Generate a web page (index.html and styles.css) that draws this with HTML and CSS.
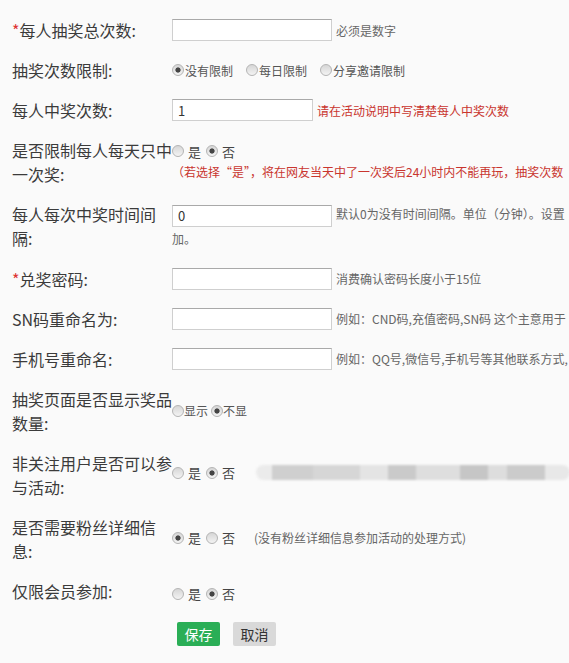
FILE: index.html
```html
<!DOCTYPE html>
<html lang="zh-CN">
<head>
<meta charset="utf-8">
<title>抽奖设置</title>
<link rel="stylesheet" href="styles.css">
</head>
<body>
<form class="form">
  <div class="row">
    <label class="label"><span class="req">*</span>每人抽奖总次数:</label>
    <div class="field">
      <input class="text" type="text">
      <span class="hint">必须是数字</span>
    </div>
  </div>

  <div class="row">
    <label class="label">抽奖次数限制:</label>
    <div class="field">
      <label class="opt"><input class="radio" type="radio" name="limit" checked><span class="opt-text">没有限制</span></label>
      <label class="opt"><input class="radio" type="radio" name="limit"><span class="opt-text">每日限制</span></label>
      <label class="opt"><input class="radio" type="radio" name="limit"><span class="opt-text">分享邀请限制</span></label>
    </div>
  </div>

  <div class="row">
    <label class="label">每人中奖次数:</label>
    <div class="field">
      <input class="text text-short" type="text" value="1">
      <span class="hint hint-red">请在活动说明中写清楚每人中奖次数</span>
    </div>
  </div>

  <div class="row">
    <label class="label">是否限制每人每天只中一次奖:</label>
    <div class="field-stack off-2">
      <div class="yn">
        <input class="radio" type="radio" name="daily"><span class="yn-text">是</span>
        <input class="radio" type="radio" name="daily" checked><span class="yn-text">否</span>
      </div>
      <div class="warn">（若选择“是”，将在网友当天中了一次奖后24小时内不能再玩，抽奖次数</div>
    </div>
  </div>

  <div class="row">
    <label class="label">每人每次中奖时间间隔:</label>
    <div class="field-flow">
      <input class="text" type="text" value="0"><span class="hint">默认0为没有时间间隔。单位（分钟）。设置</span><br><span class="hint-plain">加。</span>
    </div>
  </div>

  <div class="row">
    <label class="label"><span class="req">*</span>兑奖密码:</label>
    <div class="field">
      <input class="text" type="text">
      <span class="hint">消费确认密码长度小于15位</span>
    </div>
  </div>

  <div class="row">
    <label class="label">SN码重命名为:</label>
    <div class="field">
      <input class="text" type="text">
      <span class="hint">例如：CND码,充值密码,SN码 这个主意用于</span>
    </div>
  </div>

  <div class="row">
    <label class="label">手机号重命名:</label>
    <div class="field">
      <input class="text" type="text">
      <span class="hint">例如：QQ号,微信号,手机号等其他联系方式,</span>
    </div>
  </div>

  <div class="row">
    <label class="label">抽奖页面是否显示奖品数量:</label>
    <div class="field off-12">
      <input class="radio" type="radio" name="show"><span class="tight-text">显示</span>
      <input class="radio" type="radio" name="show" checked><span class="tight-text">不显</span>
    </div>
  </div>

  <div class="row">
    <label class="label">非关注用户是否可以参与活动:</label>
    <div class="field off-10">
      <div class="yn">
        <input class="radio" type="radio" name="follow"><span class="yn-text">是</span>
        <input class="radio" type="radio" name="follow" checked><span class="yn-text">否</span>
      </div>
      <div class="redacted"></div>
    </div>
  </div>

  <div class="row">
    <label class="label">是否需要粉丝详细信息:</label>
    <div class="field off-11">
      <div class="yn">
        <input class="radio" type="radio" name="fans" checked><span class="yn-text">是</span>
        <input class="radio" type="radio" name="fans"><span class="yn-text">否</span>
      </div>
      <span class="note">(没有粉丝详细信息参加活动的处理方式)</span>
    </div>
  </div>

  <div class="row">
    <label class="label">仅限会员参加:</label>
    <div class="field off-3">
      <div class="yn">
        <input class="radio" type="radio" name="member"><span class="yn-text">是</span>
        <input class="radio" type="radio" name="member" checked><span class="yn-text">否</span>
      </div>
    </div>
  </div>

  <div class="actions">
    <button class="btn btn-save" type="button">保存</button>
    <button class="btn btn-cancel" type="button">取消</button>
  </div>
</form>
</body>
</html>
```

FILE: styles.css
```css
html, body {
  margin: 0;
  padding: 0;
  overflow: hidden;
  background: #fafafa;
}

body {
  font-family: "Noto Sans CJK SC", sans-serif;
  color: #3b3b3b;
}

.form {
  width: 557px;
  padding: 18px 0 0 12px;
}

.row {
  display: flex;
  align-items: flex-start;
  margin-bottom: 16px;
}

.label {
  width: 160px;
  flex: none;
  font-size: 16px;
  line-height: 24px;
  color: #3b3b3b;
}

.req {
  color: #d33;
}

.field {
  display: flex;
  align-items: center;
  min-height: 24px;
  font-size: 12px;
  white-space: nowrap;
}

.field-stack {
  font-size: 12px;
  white-space: nowrap;
}

.field-flow {
  font-size: 12px;
  line-height: 24px;
  white-space: nowrap;
}

.field-flow .text {
  vertical-align: middle;
}

.off-2 { padding-top: 2px; }
.off-3 { padding-top: 3px; }
.off-10 { padding-top: 10px; }
.off-11 { padding-top: 11px; }
.off-12 { padding-top: 12px; }

.text {
  width: 160px;
  height: 22px;
  box-sizing: border-box;
  margin: 0;
  padding: 0 5px;
  border: 1px solid #cfcfcf;
  border-top-color: #a9a9a9;
  border-radius: 0;
  background: #fff;
  font-family: "Noto Sans CJK SC", sans-serif;
  font-size: 13px;
  color: #333;
}

.text-short {
  width: 141px;
}

.hint {
  margin-left: 4px;
  color: #666;
}

.hint-plain {
  color: #666;
}

.hint-red {
  color: #c9352e;
}

.radio {
  appearance: none;
  -webkit-appearance: none;
  flex: none;
  width: 12px;
  height: 12px;
  margin: 0;
  box-sizing: border-box;
  border: 1px solid #b4b4b4;
  border-radius: 50%;
  background: linear-gradient(#d6d6d6, #f3f3f3);
  vertical-align: middle;
}

.radio:checked {
  background:
    radial-gradient(circle, #444 0 2.2px, transparent 3px),
    linear-gradient(#d6d6d6, #f3f3f3);
}

.opt {
  display: inline-flex;
  align-items: center;
  margin-right: 13px;
  color: #555;
}

.opt-text {
  margin-left: 1px;
}

.yn {
  display: flex;
  align-items: center;
  height: 22px;
  font-size: 13px;
  color: #444;
}

.yn-text {
  margin: 0 5px 0 4px;
}

.warn {
  line-height: 20px;
  color: #c9352e;
}

.tight-text {
  margin-right: 3px;
  color: #555;
}

.redacted {
  margin-left: 16px;
  width: 314px;
  height: 15px;
  border-radius: 8px;
  background: linear-gradient(90deg,
    #ebebeb 0 5%,
    #cfcfcf 5% 18%,
    #d6d6d6 18% 33%,
    #e4e4e4 33% 42%,
    #cacaca 42% 51%,
    #dedede 51% 65%,
    #c6c6c6 65% 74%,
    #dddddd 74% 80%,
    #cbcbcb 80% 92%,
    #e8e8e8 92% 100%);
  filter: blur(1px);
}

.note {
  margin-left: 14px;
  color: #666;
}

.actions {
  display: flex;
  gap: 13px;
  padding-left: 165px;
}

.btn {
  width: 43px;
  height: 24px;
  padding: 0;
  border: none;
  border-radius: 2px;
  font-family: "Noto Sans CJK SC", sans-serif;
  font-size: 14px;
  line-height: 24px;
}

.btn-save {
  background: #2aae56;
  color: #fff;
}

.btn-cancel {
  background: #d9d9d9;
  color: #333;
}
```
